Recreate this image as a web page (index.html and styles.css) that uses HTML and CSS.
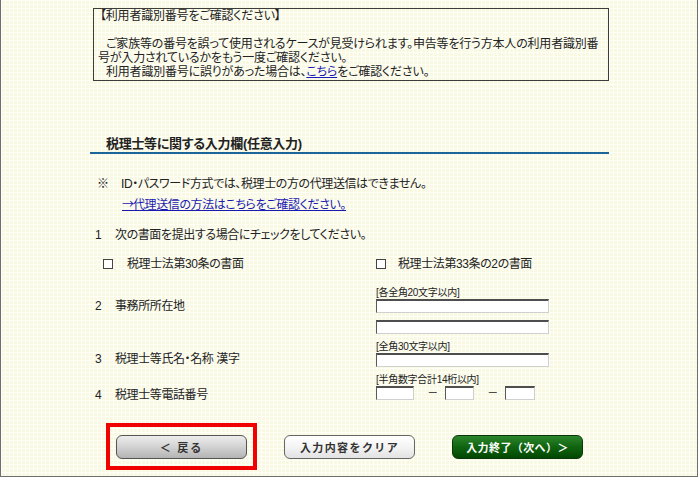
FILE: index.html
```html
<!DOCTYPE html>
<html lang="ja">
<head>
<meta charset="utf-8">
<title>税理士等に関する入力欄</title>
<link rel="stylesheet" href="styles.css">
</head>
<body>
<div class="frame">
  <div class="col">
    <div class="notice">
      <p class="notice-title">【利用者識別番号をご確認ください】</p>
      <p class="blank">&nbsp;</p>
      <p class="indent">ご家族等の番号を誤って使用されるケースが見受けられます。申告等を行う方本人の利用者識別番</p>
      <p>号が入力されているかをもう一度ご確認ください。</p>
      <p class="indent">利用者識別番号に誤りがあった場合は、<a href="#">こちら</a>をご確認ください。</p>
    </div>

    <h2 class="sec-title">税理士等に関する入力欄(任意入力)</h2>

    <div class="note"><span class="kome">※</span><span>ID・パスワード方式では、税理士の方の代理送信はできません。</span></div>
    <div class="note-link"><a href="#"><span class="arrow">→</span>代理送信の方法はこちらをご確認ください。</a></div>

    <div class="item"><span class="num">1</span>次の書面を提出する場合にチェックをしてください。</div>

    <div class="checks">
      <label class="check first"><span class="box"></span><span>税理士法第30条の書面</span></label>
      <label class="check second"><span class="box"></span><span>税理士法第33条の2の書面</span></label>
    </div>

    <div class="field-row row-addr">
      <div class="field-label"><span class="num">2</span>事務所所在地</div>
      <div class="field-input">
        <div class="hint">[各全角20文字以内]</div>
        <input class="txt wide" type="text">
        <input class="txt wide second-input" type="text">
      </div>
    </div>

    <div class="field-row row-name">
      <div class="field-label"><span class="num">3</span>税理士等氏名・名称 漢字</div>
      <div class="field-input">
        <div class="hint">[全角30文字以内]</div>
        <input class="txt wide" type="text">
      </div>
    </div>

    <div class="field-row row-tel">
      <div class="field-label"><span class="num">4</span>税理士等電話番号</div>
      <div class="field-input">
        <div class="hint">[半角数字合計14桁以内]</div>
        <div class="tel">
          <input class="txt tel1" type="text">
          <span class="dash">－</span>
          <input class="txt tel2" type="text">
          <span class="dash">－</span>
          <input class="txt tel3" type="text">
        </div>
      </div>
    </div>

    <div class="buttons">
      <div class="btn-wrap">
        <button class="btn btn-back" type="button">＜ 戻る</button>
        <span class="highlight"></span>
      </div>
      <button class="btn btn-clear" type="button">入力内容をクリア</button>
      <button class="btn btn-next" type="button">入力終了（次へ）＞</button>
    </div>
  </div>
</div>
</body>
</html>
```

FILE: styles.css
```css
html, body {
  margin: 0;
  padding: 0;
  background: #ffffff;
}

body {
  font-family: "Liberation Sans", "Noto Sans CJK JP", sans-serif;
  font-size: 12px;
  color: #222222;
  font-feature-settings: "palt";
  letter-spacing: -0.4px;
}

.frame {
  width: 696px;
  height: 476px;
  border-left: 1px solid #6f6f6f;
  border-right: 1px solid #6f6f6f;
  border-bottom: 1px solid #6f6f6f;
  overflow: hidden;
  background-color: #f8f8e3;
  background-image:
    linear-gradient(to right, #fffff8 1px, transparent 1px),
    linear-gradient(to bottom, #fffff8 1px, transparent 1px);
  background-size: 4px 4px;
}

.col {
  width: 520px;
  margin: 0 auto;
  padding-top: 8px;
}

.notice {
  margin-left: 4px;
  border: 1px solid #3c3c3c;
  padding: 0 4px 1px 4px;
  white-space: nowrap;
  letter-spacing: -0.2px;
}

.notice p {
  margin: 0;
  line-height: 14px;
}

.notice .notice-title {
  text-indent: 2px;
}

.notice .indent {
  text-indent: 8px;
}

a {
  color: #1a1ab0;
  text-decoration: underline;
}

.arrow {
  font-family: "Noto Sans CJK JP", sans-serif;
  font-feature-settings: normal;
  letter-spacing: -1px;
}

.sec-title {
  margin: 55px 0 0 1px;
  padding-left: 16px;
  font-size: 13px;
  font-weight: bold;
  line-height: 16px;
  letter-spacing: -0.3px;
  border-bottom: 2px solid #1b659c;
  color: #222222;
}

.note {
  margin-top: 20px;
  line-height: 20px;
  display: flex;
  padding-left: 8px;
}

.kome {
  width: 24px;
}

.note-link {
  line-height: 20px;
  padding-left: 33px;
}

.item {
  margin-top: 10px;
  line-height: 20px;
  padding-left: 6px;
}

.num {
  display: inline-block;
  width: 20px;
}

.checks {
  margin-top: 9px;
  display: grid;
  grid-template-columns: 287px 1fr;
  line-height: 20px;
}

.check {
  display: flex;
  align-items: center;
}

.check.first {
  padding-left: 14px;
}

.check.first .box {
  margin-right: 14px;
}

.check.second .box {
  margin-right: 12px;
}

.box {
  width: 8px;
  height: 8px;
  border: 1px solid #444444;
  background: #ffffff;
}

.field-row {
  display: grid;
  grid-template-columns: 287px 1fr;
}

.row-addr {
  margin-top: 13px;
}

.row-name,
.row-tel {
  margin-top: 7px;
}

.field-label {
  padding-left: 6px;
  line-height: 16px;
}

.row-addr .field-label {
  padding-top: 11px;
}

.row-name .field-label {
  padding-top: 10px;
}

.row-tel .field-label {
  padding-top: 13px;
}

.hint {
  font-size: 10px;
  line-height: 12px;
  letter-spacing: -0.3px;
}

.txt {
  display: block;
  box-sizing: border-box;
  height: 14px;
  margin: 0;
  padding: 0;
  background: #ffffff;
  border-style: solid;
  border-width: 2px 1px 1px 1px;
  border-color: #4e4e4e #d0d0d0 #d0d0d0 #5a5a5a;
}

.wide {
  width: 173px;
}

.second-input {
  margin-top: 7px;
}

.tel {
  display: flex;
  align-items: center;
}

.tel1 {
  width: 38px;
}

.tel2 {
  width: 29px;
}

.tel3 {
  width: 30px;
}

.dash {
  width: 31px;
  box-sizing: border-box;
  padding-left: 6px;
  text-align: center;
  font-size: 11px;
  line-height: 14px;
}

.buttons {
  margin-top: 32px;
  padding-left: 27px;
  display: flex;
  gap: 37px;
}

.btn-wrap {
  position: relative;
  display: flex;
}

.btn {
  width: 131px;
  height: 24px;
  margin: 0;
  padding: 0;
  border-radius: 6px;
  font-family: "Noto Sans CJK JP", "Noto Sans", sans-serif;
  font-size: 11px;
  font-weight: bold;
  line-height: 22px;
  text-align: center;
  cursor: pointer;
}

.btn-back {
  color: #333333;
  letter-spacing: 2px;
  border: 1px solid #555555;
  background: linear-gradient(to bottom, #ededed 0%, #d2d2d2 50%, #b4b4b4 100%);
}

.btn-clear {
  color: #333333;
  letter-spacing: 1.4px;
  border: 1px solid #666666;
  background: linear-gradient(to bottom, #ffffff 0%, #f4f4f4 50%, #e2e2e2 100%);
}

.btn-next {
  color: #ffffff;
  border: 1px solid #0b360b;
  letter-spacing: 0.4px;
  background: linear-gradient(to bottom, #2c862c 0%, #106410 50%, #024802 100%);
}

.highlight {
  position: absolute;
  left: -10px;
  top: -12px;
  right: -10px;
  bottom: -11px;
  border: 4px solid #f00000;
  pointer-events: none;
}
```
